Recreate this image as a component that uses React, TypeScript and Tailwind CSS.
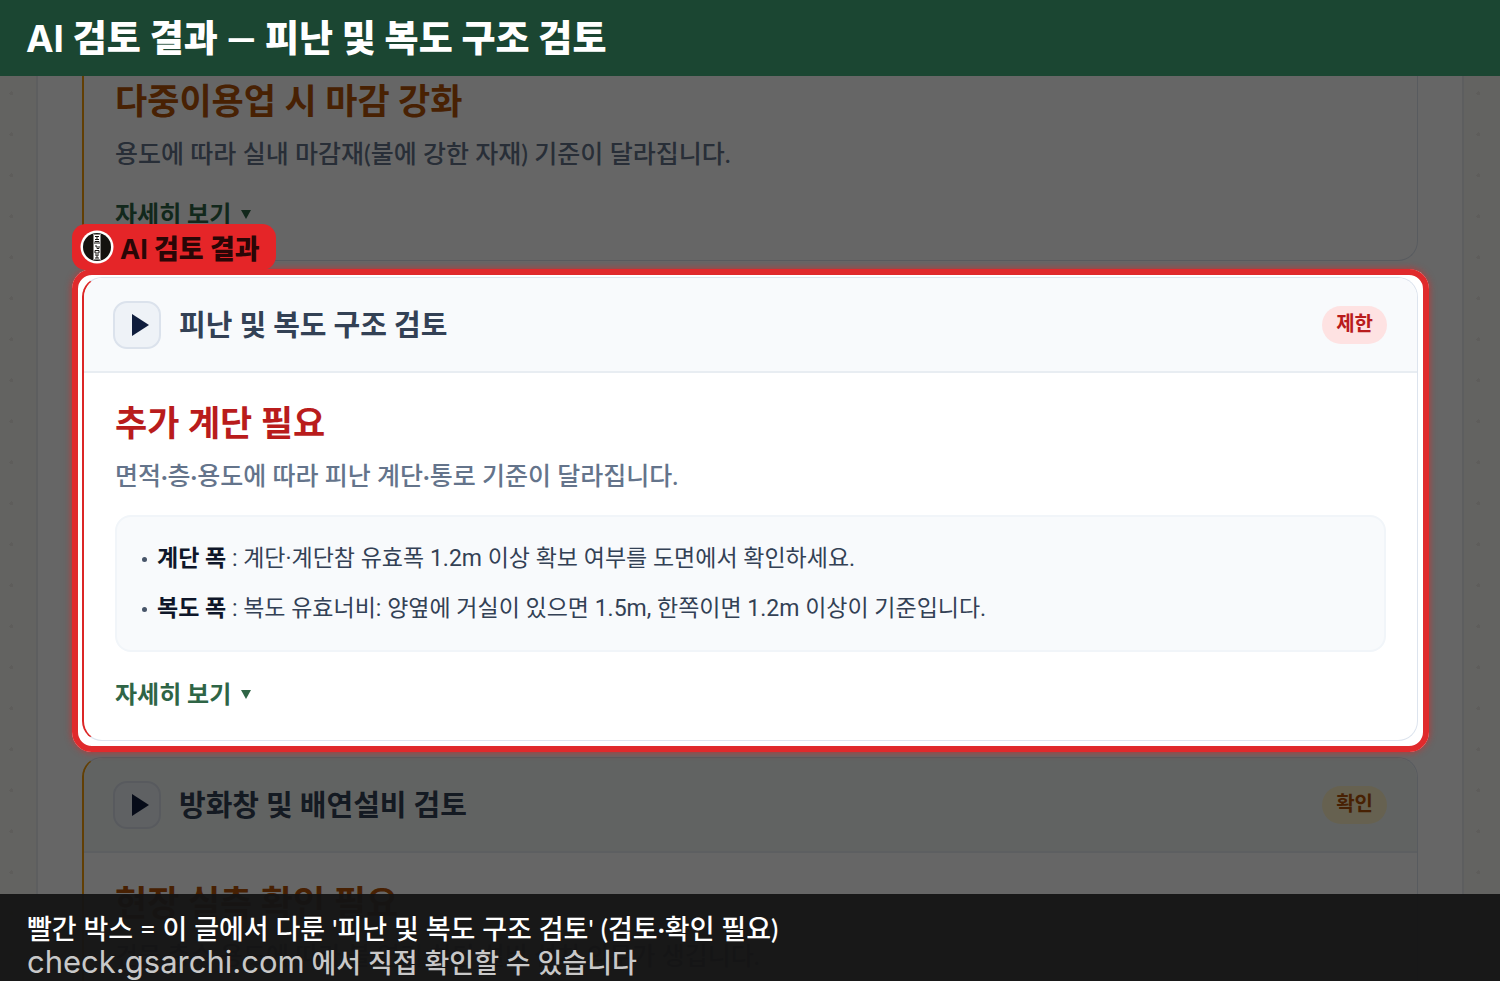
import type { ReactNode } from 'react';

type Tone = 'amber' | 'red';

const toneStyles = {
  amber: {
    border: 'border-l-[#f59e0b]',
    header: 'bg-[#f3f8f6]',
    title: 'text-[#b45309]',
    badge: 'bg-[#fef3c7] text-[#b45309]',
  },
  red: {
    border: 'border-l-[#dc2626]',
    header: 'bg-[#f8fafc]',
    title: 'text-[#b91c1c]',
    badge: 'bg-[#fee2e2] text-[#b91c1c]',
  },
};

function CardHeader({ title, badge, tone }: { title: string; badge: string; tone: Tone }) {
  return (
    <div
      className={`flex h-[95px] items-center rounded-t-[20px] border-b-2 border-[#e8edf2] pr-[30px] pl-[29px] ${toneStyles[tone].header}`}
    >
      <button
        type="button"
        aria-label={title}
        className="flex size-12 items-center justify-center rounded-[14px] border-2 border-[#dbe2ec] bg-[#eef2f7]"
      >
        <svg viewBox="0 0 18 22" className="ml-1.5 h-[22px] w-[18px]" aria-hidden="true">
          <path d="M1 0 L18 11 L1 22 Z" fill="#0f1d3d" />
        </svg>
      </button>
      <h2 className="ml-[18px] flex-1 text-[29px] leading-10 font-bold text-[#334155]">{title}</h2>
      <span
        className={`flex h-[38px] items-center rounded-full px-[14px] pb-1 text-[20px] leading-8 font-bold ${toneStyles[tone].badge}`}
      >
        {badge}
      </span>
    </div>
  );
}

function DetailLink() {
  return (
    <a href="#detail" className="flex h-9 w-fit items-center gap-[10px] text-[24px] font-bold text-[#2f6546]">
      자세히 보기
      <svg viewBox="0 0 10 9" className="h-[9px] w-[10px]" aria-hidden="true">
        <path d="M0 0 H10 L5 9 Z" fill="currentColor" />
      </svg>
    </a>
  );
}

function CardBody({ title, text, tone, children }: { title: string; text: string; tone: Tone; children?: ReactNode }) {
  return (
    <div className="px-[31px] pb-7">
      <h3 className={`text-[35px] leading-[46px] font-bold ${toneStyles[tone].title}`}>{title}</h3>
      <p className="mt-[9px] text-[25px] leading-[42px] font-medium text-[#64748b]">{text}</p>
      {children}
      <div className="mt-[22px]">
        <DetailLink />
      </div>
    </div>
  );
}

function Item({ label, text }: { label: string; text: string }) {
  return (
    <li className="flex items-center font-['Roboto','Noto_Sans_CJK_KR',sans-serif] text-[23px] leading-[50px] text-[#334155]">
      <span className="mr-[10px] ml-px size-[5px] rounded-full bg-[#475569]" />
      <span>
        <strong className="font-bold text-[#0f172a]">{label}</strong> : {text}
      </span>
    </li>
  );
}

function Logo() {
  return (
    <svg viewBox="0 0 34 34" className="size-[34px]" aria-hidden="true">
      <circle cx="17" cy="17" r="16.5" fill="#fff" />
      <circle cx="17" cy="17" r="14" fill="#14120f" />
      <rect x="13" y="4" width="8" height="26" fill="#fff" />
      <g fill="none" stroke="#14120f" strokeWidth="1">
        <path d="M13.5 4.5 H20.5 V29.5 H13.5 Z" strokeWidth="0.5" />
        <path d="M15 6.5 H19 M15 9.5 H19 M17 6.5 V9.5" />
        <path d="M15 11.5 H19 M15 11.5 V14 M17 11.5 V14 M19 11.5 V14" />
        <path d="M15 16 H17 V18.5 H19 V16" />
        <path d="M15 20.5 H19 V23 H15 Z" />
        <path d="M15 25 H19 M17 25 V28 M15 28 H19" />
      </g>
    </svg>
  );
}

const cardBase = 'rounded-[20px] border border-l-2 border-[#dde4ee] bg-white';
const gutter =
  "w-9 shrink-0 bg-[#f8f7f3] bg-[radial-gradient(circle,#ebe9e4_2px,transparent_2px)] bg-[size:41px_41px]";

export default function App() {
  return (
    <div className="relative flex h-screen flex-col overflow-hidden font-['Lato','Noto_Sans_CJK_KR',sans-serif]">
      <header className="z-20 flex h-[76px] shrink-0 items-center bg-[#1b4632] px-[26px]">
        <h1 className="text-[37px] leading-[48px] font-black text-white">
          <span className="font-['Inter'] font-bold">AI</span> 검토 결과 — 피난 및 복도 구조 검토
        </h1>
      </header>

      <main className="flex min-h-0 flex-1 overflow-hidden">
        <div className={`${gutter} bg-[position:-9px_-3px]`} />
        <div className="flex h-fit min-w-0 flex-1 flex-col gap-4 border-x-2 border-[#e9ebee] bg-white px-11">
          <section
            className={`rounded-b-[20px] border border-t-0 border-l-2 border-[#dde4ee] bg-white pt-px ${toneStyles.amber.border}`}
          >
            <CardBody
              tone="amber"
              title="다중이용업 시 마감 강화"
              text="용도에 따라 실내 마감재(불에 강한 자재) 기준이 달라집니다."
            />
          </section>

          <section className={`relative z-10 ${cardBase} ${toneStyles.red.border}`}>
            <div className="pointer-events-none absolute -top-[9px] -right-3 -bottom-3 -left-3 rounded-[20px] border-[6px] border-[#e02a2c] shadow-[0_0_6px_1px_#dc262699,0_0_0_2000px_#00000099]" />
            <div className="absolute -top-[54px] -left-3 flex h-[46px] items-center gap-[6px] rounded-[14px] bg-[#e52528] pr-4 pl-2 text-[27px] font-extrabold whitespace-nowrap text-[#2a0606]">
              <Logo />
              <span className="pt-1.5">
                <span className="font-['Inter'] font-bold">AI</span> 검토 결과
              </span>
            </div>
            <CardHeader tone="red" title="피난 및 복도 구조 검토" badge="제한" />
            <div className="pt-[26px]">
              <CardBody tone="red" title="추가 계단 필요" text="면적·층·용도에 따라 피난 계단·통로 기준이 달라집니다.">
                <ul className="mt-[19px] mb-6 rounded-[16px] border-2 border-[#f1f5f9] bg-[#f8fafc] px-6 pt-[17px] pb-4">
                  <Item label="계단 폭" text="계단·계단참 유효폭 1.2m 이상 확보 여부를 도면에서 확인하세요." />
                  <Item
                    label="복도 폭"
                    text="복도 유효너비: 양옆에 거실이 있으면 1.5m, 한쪽이면 1.2m 이상이 기준입니다."
                  />
                </ul>
              </CardBody>
            </div>
          </section>

          <section className={`${cardBase} ${toneStyles.amber.border}`}>
            <CardHeader tone="amber" title="방화창 및 배연설비 검토" badge="확인" />
            <div className="pt-[26px]">
              <CardBody
                tone="amber"
                title="현장 실측 확인 필요"
                text="건물 층수·용도에 따라 불·연기 차단 설비 설치 의무가 생깁니다."
              />
            </div>
          </section>
        </div>
        <div className={`${gutter} bg-[position:-6px_-3px]`} />
      </main>

      <footer className="absolute inset-x-0 bottom-0 z-20 h-[87px] bg-[#141414]/95 px-[27px] pt-[18px] text-[27px] leading-[33px] font-medium">
        <p className="text-white">빨간 박스 = 이 글에서 다룬 '피난 및 복도 구조 검토' (검토·확인 필요)</p>
        <p className="text-[#c8c8c8]">
          <span className="font-['Inter'] text-[31px] font-normal">check.gsarchi.com</span> 에서 직접 확인할 수 있습니다
        </p>
      </footer>
    </div>
  );
}
